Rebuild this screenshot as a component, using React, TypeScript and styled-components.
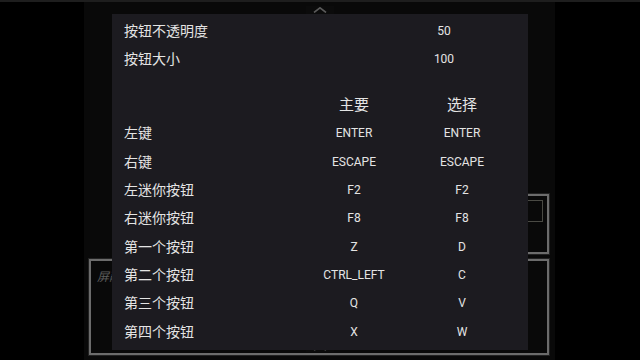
import React from "react";
import styled, { createGlobalStyle } from "styled-components";

const Global = createGlobalStyle`
  html, body { margin: 0; padding: 0; background: #000; }
  body { width: 640px; height: 360px; overflow: hidden; font-family: Roboto, "Noto Sans CJK SC", sans-serif; }
  #root { width: 640px; height: 360px; }
`;

const Screen = styled.div`
  position: relative;
  width: 640px;
  height: 360px;
  background: #000;
  border-top: 2px solid #1e1e1e;
  box-sizing: border-box;
  display: flex;
  justify-content: flex-start;
`;

const Backdrop = styled.div`
  margin-left: 84px;
  width: 471px;
  height: 100%;
  background: #090909;
  box-sizing: border-box;
  padding: 192px 6px 5px 5px;
  display: flex;
  flex-direction: column;
  gap: 5px;
`;

const Frame = styled.div<{ $h: number; $indent?: number }>`
  height: ${(p) => p.$h}px;
  margin-left: ${(p) => p.$indent ?? 0}px;
  border: 2px solid #6c6c6c;
  box-shadow: 0 0 0 1px #222;
  box-sizing: border-box;
  padding: 4px 4px 0 6px;
  display: flex;
  flex-direction: column;
  align-items: flex-start;
`;

const InputBox = styled.div`
  align-self: flex-end;
  width: 120px;
  height: 22px;
  border: 1px solid #4a4a44;
  box-sizing: border-box;
`;

const FrameLabel = styled.div`
  color: #5c5c5c;
  font-size: 12px;
  font-style: italic;
  font-family: "Noto Sans CJK SC", sans-serif;
  margin-top: 2px;
`;

const Chevron = styled.div<{ $top: number; $color: string }>`
  position: absolute;
  left: 306px;
  top: ${(p) => p.$top}px;
  width: 28px;
  height: 8px;
  background: #0b0b0b;
  display: flex;
  justify-content: center;
  align-items: center;
  svg { display: block; }
  color: ${(p) => p.$color};
`;

const Panel = styled.div`
  position: absolute;
  left: 112px;
  top: 12px;
  width: 416px;
  height: 336px;
  background: #1c1b20;
  box-sizing: border-box;
  padding: 3px 12px 0 12px;
  color: #e4e4e4;
`;

const SettingRow = styled.div`
  display: grid;
  grid-template-columns: 1fr 144px;
  height: 28px;
  align-items: center;
`;

const Label = styled.div`
  font-family: "Noto Sans CJK SC", sans-serif;
  font-size: 14px;
  line-height: 1;
  padding-bottom: 2px;
`;

const Value = styled.div`
  font-family: Roboto, sans-serif;
  font-size: 12px;
  text-align: center;
`;

const Table = styled.div`
  margin-top: 18px;
  display: grid;
  grid-template-columns: 1fr 108px 108px;
  grid-auto-rows: 28.3px;
  align-items: center;
`;

const Head = styled.div`
  font-family: "Noto Sans CJK SC", sans-serif;
  font-size: 15px;
  line-height: 1;
  text-align: center;
  padding-bottom: 4px;
`;

const Key = styled.div`
  font-family: Roboto, sans-serif;
  font-size: 12px;
  text-align: center;
`;

const Up = () => (
  <svg width="14" height="6" viewBox="0 0 14 6">
    <path d="M1 5.5 L7 0.8 L13 5.5" fill="none" stroke="currentColor" strokeWidth="1.6" />
  </svg>
);

const rows: [string, string, string][] = [
  ["左键", "ENTER", "ENTER"],
  ["右键", "ESCAPE", "ESCAPE"],
  ["左迷你按钮", "F2", "F2"],
  ["右迷你按钮", "F8", "F8"],
  ["第一个按钮", "Z", "D"],
  ["第二个按钮", "CTRL_LEFT", "C"],
  ["第三个按钮", "Q", "V"],
  ["第四个按钮", "X", "W"],
];

export default function App() {
  return (
    <>
      <Global />
      <Screen>
        <Backdrop>
          <Frame $h={60} $indent={60}>
            <InputBox />
          </Frame>
          <Frame $h={96}>
            <FrameLabel>屏蔽</FrameLabel>
          </Frame>
        </Backdrop>
        <Chevron $top={4} $color="#5a5a5a">
          <Up />
        </Chevron>
        <Chevron $top={342} $color="#3c3c3c">
          <Up />
        </Chevron>
        <Panel>
          <SettingRow>
            <Label>按钮不透明度</Label>
            <Value>50</Value>
          </SettingRow>
          <SettingRow>
            <Label>按钮大小</Label>
            <Value>100</Value>
          </SettingRow>
          <Table>
            <div />
            <Head>主要</Head>
            <Head>选择</Head>
            {rows.map(([l, a, b]) => (
              <React.Fragment key={l}>
                <Label>{l}</Label>
                <Key>{a}</Key>
                <Key>{b}</Key>
              </React.Fragment>
            ))}
          </Table>
        </Panel>
      </Screen>
    </>
  );
}
